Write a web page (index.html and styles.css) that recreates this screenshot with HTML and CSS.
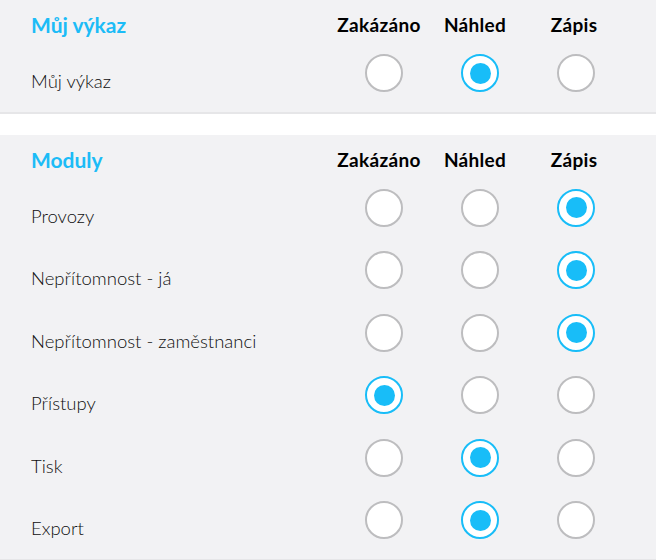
FILE: index.html
```html
<!DOCTYPE html>
<html lang="cs">
<head>
<meta charset="utf-8">
<title>Oprávnění</title>
<link rel="stylesheet" href="styles.css">
</head>
<body>
<section class="panel">
  <div class="row head">
    <div class="title">Můj výkaz</div>
    <div class="col-h">Zakázáno</div>
    <div class="col-h">Náhled</div>
    <div class="col-h">Zápis</div>
  </div>
  <div class="row">
    <div class="label">Můj výkaz</div>
    <div class="cell"><span class="radio"></span></div>
    <div class="cell"><span class="radio on"></span></div>
    <div class="cell"><span class="radio"></span></div>
  </div>
</section>
<section class="panel">
  <div class="row head">
    <div class="title">Moduly</div>
    <div class="col-h">Zakázáno</div>
    <div class="col-h">Náhled</div>
    <div class="col-h">Zápis</div>
  </div>
  <div class="row">
    <div class="label">Provozy</div>
    <div class="cell"><span class="radio"></span></div>
    <div class="cell"><span class="radio"></span></div>
    <div class="cell"><span class="radio on"></span></div>
  </div>
  <div class="row">
    <div class="label">Nepřítomnost - já</div>
    <div class="cell"><span class="radio"></span></div>
    <div class="cell"><span class="radio"></span></div>
    <div class="cell"><span class="radio on"></span></div>
  </div>
  <div class="row">
    <div class="label">Nepřítomnost - zaměstnanci</div>
    <div class="cell"><span class="radio"></span></div>
    <div class="cell"><span class="radio"></span></div>
    <div class="cell"><span class="radio on"></span></div>
  </div>
  <div class="row">
    <div class="label">Přístupy</div>
    <div class="cell"><span class="radio on"></span></div>
    <div class="cell"><span class="radio"></span></div>
    <div class="cell"><span class="radio"></span></div>
  </div>
  <div class="row">
    <div class="label">Tisk</div>
    <div class="cell"><span class="radio"></span></div>
    <div class="cell"><span class="radio on"></span></div>
    <div class="cell"><span class="radio"></span></div>
  </div>
  <div class="row">
    <div class="label">Export</div>
    <div class="cell"><span class="radio"></span></div>
    <div class="cell"><span class="radio on"></span></div>
    <div class="cell"><span class="radio"></span></div>
  </div>
</section>
</body>
</html>
```
FILE: styles.css
```css
html, body {
  margin: 0;
  padding: 0;
  background: #ffffff;
}
body {
  font-family: "Lato", "Liberation Sans", sans-serif;
  color: #222222;
}
.panel {
  width: 656px;
  box-sizing: border-box;
  background: #f2f2f4;
  border-bottom: 2px solid #e6e6e8;
  padding: 0 32px 7px 31px;
  margin-bottom: 21px;
}
.row {
  display: grid;
  grid-template-columns: 1fr 96px 96px 96px;
  align-items: center;
  height: 62.5px;
}
.row.head {
  height: 34px;
  padding-top: 8px;
  align-items: center;
}
.title {
  font-size: 21px;
  font-weight: 700;
  color: #1cbcf7;
  line-height: 28px;
}
.col-h {
  font-size: 19px;
  font-weight: 700;
  letter-spacing: 0.3px;
  color: #000000;
  text-align: center;
  line-height: 28px;
  padding-right: 10px;
}
.col-h:last-child {
  padding-right: 4px;
}
.label {
  font-size: 18.5px;
  font-weight: 300;
  color: #0e0e0e;
  padding-top: 16px;
}
.cell {
  display: flex;
  justify-content: center;
}
.radio {
  width: 38px;
  height: 38px;
  box-sizing: border-box;
  border-radius: 50%;
  border: 2px solid #bdbdbf;
  background: #ffffff;
  display: flex;
  align-items: center;
  justify-content: center;
}
.radio.on {
  border-color: #18bdf8;
}
.radio.on::after {
  content: "";
  width: 21px;
  height: 21px;
  border-radius: 50%;
  background: #18bdf8;
}
```
